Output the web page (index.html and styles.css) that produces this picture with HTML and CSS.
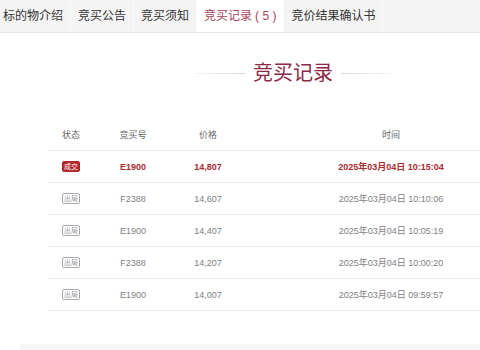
FILE: index.html
```html
<!DOCTYPE html>
<html lang="zh-CN">
<head>
  <meta charset="UTF-8">
  <meta name="viewport" content="width=device-width, initial-scale=1.0">
  <title>竞买记录</title>
  <link rel="stylesheet" href="styles.css">
</head>
<body>
  <nav class="tabs">
    <a class="tab" href="#">标的物介绍</a>
    <a class="tab" href="#">竞买公告</a>
    <a class="tab" href="#">竞买须知</a>
    <a class="tab active" href="#">竞买记录<span class="count">( 5 )</span></a>
    <a class="tab" href="#">竞价结果确认书</a>
  </nav>

  <section class="records">
    <h2 class="records-title">
      <span class="rule left"></span>
      <span>竞买记录</span>
      <span class="rule right"></span>
    </h2>

    <div class="row head">
      <div>状态</div>
      <div>竞买号</div>
      <div>价格</div>
      <div>时间</div>
    </div>
    <div class="row win">
      <div><span class="badge deal">成交</span></div>
      <div>E1900</div>
      <div>14,807</div>
      <div>2025年03月04日 10:15:04</div>
    </div>
    <div class="row">
      <div><span class="badge out">出局</span></div>
      <div>F2388</div>
      <div>14,607</div>
      <div>2025年03月04日 10:10:06</div>
    </div>
    <div class="row">
      <div><span class="badge out">出局</span></div>
      <div>E1900</div>
      <div>14,407</div>
      <div>2025年03月04日 10:05:19</div>
    </div>
    <div class="row">
      <div><span class="badge out">出局</span></div>
      <div>F2388</div>
      <div>14,207</div>
      <div>2025年03月04日 10:00:20</div>
    </div>
    <div class="row">
      <div><span class="badge out">出局</span></div>
      <div>E1900</div>
      <div>14,007</div>
      <div>2025年03月04日 09:59:57</div>
    </div>
  </section>

  <div class="pager">
    <span>共1页</span>
    <span>首页 上一页</span>
  </div>
</body>
</html>
```

FILE: styles.css
```css
body {
  margin: 0;
  font-family: "Liberation Sans", "Noto Sans CJK SC", sans-serif;
  background-color: #fff;
  color: #333;
  overflow: hidden;
}
.tabs {
  display: flex;
  height: 32px;
  margin-left: -4px;
  background-color: #f4f4f4;
  border-bottom: 1px solid #e6e6e6;
}
.tab {
  padding: 0 7px;
  line-height: 32px;
  font-size: 12px;
  color: #333;
  text-decoration: none;
  border-right: 1px solid #fafafa;
}
.tab.active {
  background-color: #fff;
  color: #a8405c;
}
.tab .count {
  margin-left: 3px;
}
.records {
  width: 490px;
  margin-left: 48px;
}
.records-title {
  display: flex;
  align-items: center;
  justify-content: center;
  gap: 8px;
  margin: 30px 0 36px;
  font-size: 20px;
  line-height: 20px;
  font-weight: normal;
  color: #8e2848;
}
.rule {
  width: 50px;
  height: 1px;
}
.rule.left {
  background: linear-gradient(to right, #f4f4f4, #d8d8d8);
}
.rule.right {
  background: linear-gradient(to right, #d8d8d8, #f4f4f4);
}
.row {
  display: grid;
  grid-template-columns: 46px 78px 72px 1fr;
  align-items: center;
  height: 32px;
  box-sizing: border-box;
  border-bottom: 1px solid #ededed;
  font-size: 9px;
  color: #808080;
  text-align: center;
}
.row.head {
  color: #666;
}
.row.win {
  color: #ab2a30;
  font-weight: bold;
}
.badge {
  display: inline-block;
  padding: 0 1px;
  font-size: 7px;
  line-height: 9px;
  font-weight: normal;
  border-radius: 2px;
}
.badge.deal {
  background-color: #b3262d;
  border: 1px solid #b3262d;
  color: #fff;
}
.badge.out {
  border: 1px solid #a8a8a8;
  color: #999;
}
.pager {
  display: flex;
  justify-content: flex-end;
  gap: 40px;
  margin: 33px 0 0 20px;
  padding: 3px 15px 0 0;
  height: 30px;
  background-color: #f7f7f7;
  font-size: 11px;
  color: #666;
}
```
